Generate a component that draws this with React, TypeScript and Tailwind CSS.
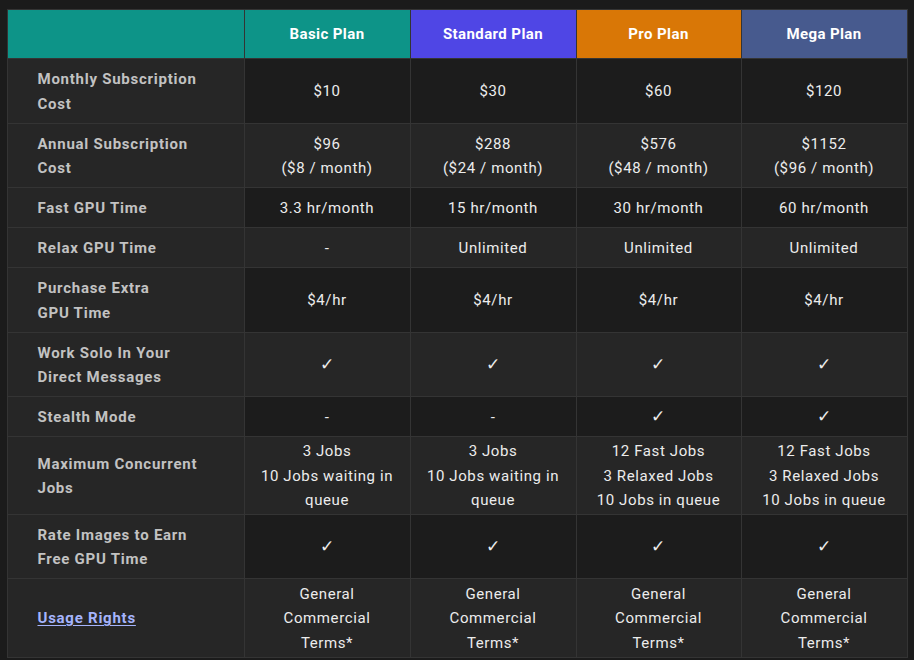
import React from "react";

type Row = { label: React.ReactNode; cells: React.ReactNode[]; dark: boolean; h: string };

const L = (...lines: string[]) => (
  <>
    {lines.map((l, i) => (
      <React.Fragment key={i}>
        {i > 0 && <br />}
        {l}
      </React.Fragment>
    ))}
  </>
);

const check = <span className="text-[17px]">✓</span>;

const rows: Row[] = [
  { h: "h-[65px]", label: L("Monthly Subscription", "Cost"), cells: ["$10", "$30", "$60", "$120"], dark: true },
  {
    h: "h-[64px]",
    label: L("Annual Subscription", "Cost"),
    cells: [L("$96", "($8 / month)"), L("$288", "($24 / month)"), L("$576", "($48 / month)"), L("$1152", "($96 / month)")],
    dark: false,
  },
  { h: "h-[40px]", label: "Fast GPU Time", cells: ["3.3 hr/month", "15 hr/month", "30 hr/month", "60 hr/month"], dark: true },
  { h: "h-[40px]", label: "Relax GPU Time", cells: ["-", "Unlimited", "Unlimited", "Unlimited"], dark: false },
  { h: "h-[65px]", label: L("Purchase Extra", "GPU Time"), cells: ["$4/hr", "$4/hr", "$4/hr", "$4/hr"], dark: true },
  { h: "h-[64px]", label: L("Work Solo In Your", "Direct Messages"), cells: [check, check, check, check], dark: false },
  { h: "h-[40px]", label: "Stealth Mode", cells: ["-", "-", check, check], dark: true },
  {
    h: "h-[78px]",
    label: L("Maximum Concurrent", "Jobs"),
    cells: [
      <>3 Jobs<br />10 Jobs waiting in queue</>,
      <>3 Jobs<br />10 Jobs waiting in queue</>,
      L("12 Fast Jobs", "3 Relaxed Jobs", "10 Jobs in queue"),
      L("12 Fast Jobs", "3 Relaxed Jobs", "10 Jobs in queue"),
    ],
    dark: false,
  },
  { h: "h-[64px]", label: L("Rate Images to Earn", "Free GPU Time"), cells: [check, check, check, check], dark: true },
  {
    h: "h-[79px]",
    label: (
      <a href="#" className="text-[#a5b4fc] underline underline-offset-2">
        Usage Rights
      </a>
    ),
    cells: [
      L("General", "Commercial", "Terms*"),
      L("General", "Commercial", "Terms*"),
      L("General", "Commercial", "Terms*"),
      L("General", "Commercial", "Terms*"),
    ],
    dark: false,
  },
];

const headers = [
  { name: "Basic Plan", bg: "bg-[#0d9488]" },
  { name: "Standard Plan", bg: "bg-[#4f46e5]" },
  { name: "Pro Plan", bg: "bg-[#d97706]" },
  { name: "Mega Plan", bg: "bg-[#475a8e]" },
];

export default function App() {
  return (
    <div
      className="min-h-[660px] w-full bg-[#1b1b1b] pt-[9px] flex justify-center items-start"
      style={{ fontFamily: "Roboto, 'Noto Sans', sans-serif" }}
    >
      <table className="table-fixed border-collapse border border-[#343434] w-[900px] text-[15px] leading-[24.5px] tracking-[0.6px]">
        <colgroup>
          <col className="w-[237px]" />
          <col className="w-[166px]" />
          <col className="w-[166px]" />
          <col className="w-[165px]" />
          <col className="w-[166px]" />
        </colgroup>
        <thead>
          <tr className="h-[49px]">
            <th className="bg-[#0d9488] border border-[#343434] p-0"></th>
            {headers.map((h) => (
              <th
                key={h.name}
                className={`${h.bg} border border-[#343434] p-0 text-white font-bold text-center tracking-[0.4px]`}
              >
                {h.name}
              </th>
            ))}
          </tr>
        </thead>
        <tbody>
          {rows.map((r, i) => (
            <tr key={i} className={r.h}>
              <td className="bg-[#262626] border border-[#343434] pt-px pb-0 pl-[30px] pr-3 text-left font-bold text-[#c2c2c2] tracking-[0.75px] align-middle">
                {r.label}
              </td>
              {r.cells.map((c, j) => (
                <td
                  key={j}
                  className={`${r.dark ? "bg-[#1c1c1c]" : "bg-[#262626]"} border border-[#343434] pt-px pb-0 px-3 text-center text-[#ececec] align-middle`}
                >
                  {c}
                </td>
              ))}
            </tr>
          ))}
        </tbody>
      </table>
    </div>
  );
}
